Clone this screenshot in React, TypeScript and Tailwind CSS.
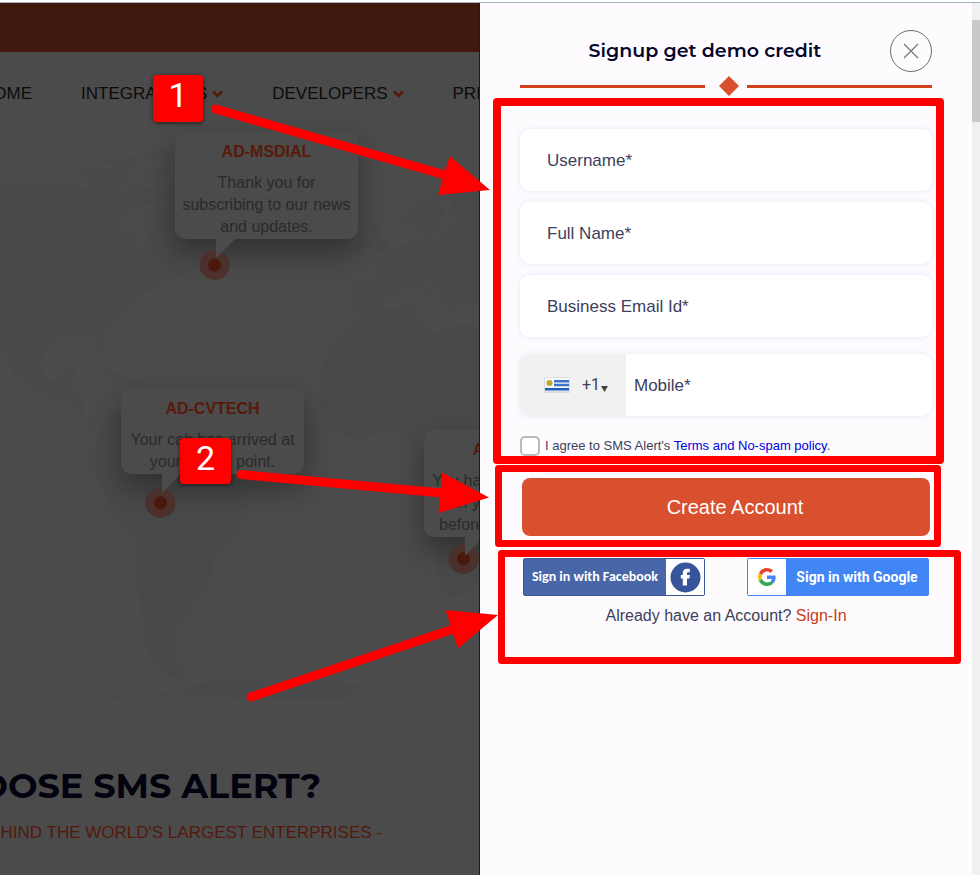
import React, { useState } from 'react';

const NAV = [
  { label: 'HOME', menu: false },
  { label: 'INTEGRATIONS', menu: true },
  { label: 'DEVELOPERS', menu: true },
  { label: 'PRICING', menu: false },
];

const PINS = [
  {
    id: 'AD-MSDIAL',
    lines: ['Thank you for', 'subscribing to our news', 'and updates.'],
    place: 'left-[175px] top-[79px]',
    dotY: 26,
  },
  {
    id: 'AD-CVTECH',
    lines: ['Your cab has arrived at', 'your pickup point.'],
    place: 'left-[121px] top-[336px]',
    dotY: 29,
  },
  {
    id: 'AD-EXAMS',
    lines: ['You have an exam next', 'in your exam hall', 'before coming to hall.'],
    place: 'left-[424px] top-[377px]',
    dotY: 22,
  },
];

const FIELDS = [
  { id: 'username', label: 'Username*', type: 'text' },
  { id: 'fullname', label: 'Full Name*', type: 'text' },
  { id: 'email', label: 'Business Email Id*', type: 'email' },
];

function WorldMap() {
  return (
    <svg className="absolute left-0 top-0 h-[648px] w-[480px]" viewBox="0 52 480 648" fill="#47494b" aria-hidden="true">
      {/* North America */}
      <path d="M0 182 L20 184 L40 184 L60 183 L75 185 L90 190 L110 190 L128 190 L136 184 L150 190 L162 186 L170 192 L164 204 L154 203 L142 206 L130 212 L118 222 L124 232 L136 236 L138 248 L143 250 L146 238 L151 230 L152 218 L160 207 L172 210 L176 222 L186 232 L197 246 L190 254 L178 262 L190 264 L192 272 L178 274 L166 281 L158 287 L150 291 L140 295 L133 302 L128 312 L118 320 L106 330 L103 336 L103 350 L100 354 L97 346 L95 338 L84 336 L74 338 L66 336 L54 340 L46 346 L42 358 L42 370 L46 380 L54 382 L62 378 L66 371 L74 368 L76 372 L70 382 L72 392 L82 395 L84 404 L84 416 L90 424 L99 422 L105 418 L99 426 L92 426 L82 418 L74 408 L62 400 L50 396 L36 390 L22 382 L12 374 L12 366 L4 354 L0 346 Z" />
      <path d="M78 174 L92 168 L108 168 L128 172 L130 182 L122 186 L106 190 L92 188 L90 180 Z" />
      <path d="M98 163 L112 159 L134 157 L139 163 L126 168 L114 165 Z M140 172 L158 168 L172 170 L160 178 L146 176 Z M142 156 L162 150 L174 152 L170 164 L156 162 Z" />
      {/* Caribbean */}
      <path d="M85 370 L94 365 L106 367 L120 376 L112 377 L100 370 Z M120 378 L132 377 L140 381 L136 385 L124 384 Z" />
      {/* South America */}
      <path d="M105 416 L122 414 L140 420 L158 430 L176 440 L196 452 L222 466 L250 484 L249 496 L242 508 L240 530 L236 540 L222 550 L213 556 L213 574 L206 588 L200 598 L190 602 L191 612 L183 620 L175 626 L178 632 L172 638 L175 646 L172 656 L179 666 L190 676 L184 679 L170 676 L158 666 L148 652 L144 630 L141 610 L137 580 L136 546 L132 532 L118 522 L110 508 L104 490 L94 470 L94 448 L102 434 Z" />
      {/* Europe */}
      <path d="M480 180 L452 184 L436 192 L420 204 L402 212 L401 222 L406 226 L413 224 L420 232 L424 240 L434 236 L440 220 L446 210 L438 206 L444 198 L452 202 L450 214 L468 218 L452 222 L444 234 L432 242 L424 242 L412 240 L404 244 L394 250 L386 256 L372 258 L378 264 L378 276 L370 282 L354 282 L353 294 L350 308 L356 316 L366 312 L380 308 L386 298 L400 290 L412 284 L420 292 L430 302 L432 308 L424 300 L428 304 L434 298 L422 282 L424 274 L434 284 L444 294 L442 304 L452 312 L458 308 L462 296 L472 304 L480 306 Z" />
      <path d="M370 226 L380 222 L380 236 L389 246 L386 252 L372 254 L378 246 Z M356 242 L368 236 L370 246 L358 250 Z" />
      {/* Africa */}
      <path d="M480 326 L466 324 L450 326 L444 332 L432 332 L420 324 L414 312 L416 306 L400 307 L384 310 L364 314 L352 322 L346 334 L332 344 L322 366 L322 388 L320 404 L330 424 L344 436 L362 438 L380 434 L398 432 L410 440 L420 460 L430 520 L434 560 L440 580 L446 597 L462 596 L480 584 Z" />
      {/* Antarctica */}
      <path d="M108 698 L122 694 L118 699 Z M132 697 L142 690 L140 699 Z M154 693 L170 692 L174 697 L158 697 Z M180 690 L196 684 L220 682 L256 682 L300 682 L340 680 L352 686 L366 685 L346 694 L346 700 L230 700 L228 692 L210 696 L184 697 Z" />
    </svg>
  );
}

function MapPin({ id, lines, place, dotY }: { id: string; lines: string[]; place: string; dotY: number }) {
  return (
    <div className={`absolute w-[183px] ${place}`}>
      <div className="rounded-[10px] bg-[#4b4b4b] px-1 pb-px text-center shadow-[0_14px_30px_rgba(0,0,0,0.35)]">
        <h3 className="mx-1 border-b border-[#474747] pt-[10px] pb-[8px] text-base/[22px] font-bold text-[#571a0a]">{id}</h3>
        <p className="text-base/[22px] whitespace-nowrap text-[#2a2a2a]">
          {lines.map(l => (
            <span key={l} className="block">{l}</span>
          ))}
        </p>
      </div>
      {/* Tail and location dot */}
      <svg className="ml-6 block h-[46px] w-9" viewBox="0 0 36 46" aria-hidden="true">
        <circle cx="15.5" cy={dotY} r="15" fill="#4c302b" />
        <circle cx="15.5" cy={dotY} r="6.5" fill="#4d180c" />
        <path d="M17 0H36L17 19Z" fill="#4b4b4b" />
      </svg>
    </div>
  );
}

function Flag() {
  return (
    <svg className="h-4 w-[26px]" viewBox="0 0 26 16" aria-hidden="true">
      <rect width="26" height="16" rx="1" fill="#d9dee4" />
      <rect x="1" y="1" width="24" height="13" fill="#f6f8fa" />
      <path d="M10 4.2H25M10 8H25" stroke="#3e75c8" strokeWidth="2.4" />
      <path d="M1 12.2H25" stroke="#1d5fc0" strokeWidth="2.4" />
      <circle cx="5.5" cy="6" r="3" fill="#c2a62c" />
    </svg>
  );
}

function FacebookMark() {
  return (
    <svg className="size-[31px]" viewBox="0 0 31 31" aria-hidden="true">
      <circle cx="15.5" cy="15.500" r="15" fill="#37559b" />
      <path d="M12.800 23.500V16.400H10.800V13H12.800V11C12.800 8 14.500 6.800 17.300 6.800H19.800V10.200H18.300C17.400 10.200 17 10.600 17 11.400V13H19.800L19.400 16.400H17V23.500Z" fill="#fff" />
    </svg>
  );
}

function GoogleMark() {
  return (
    <svg className="size-[18px]" viewBox="0 0 48 48" aria-hidden="true">
      <path fill="#EA4335" d="M24 9.5c3.54 0 6.71 1.22 9.21 3.6l6.85-6.85C35.9 2.38 30.47 0 24 0 14.62 0 6.51 5.38 2.56 13.22l7.98 6.19C12.43 13.72 17.74 9.5 24 9.5z" />
      <path fill="#4285F4" d="M46.98 24.55c0-1.57-.15-3.09-.38-4.55H24v9.02h12.94c-.58 2.96-2.26 5.48-4.78 7.18l7.73 6c4.51-4.18 7.09-10.36 7.09-17.65z" />
      <path fill="#FBBC05" d="M10.53 28.59c-.48-1.45-.76-2.99-.76-4.59s.27-3.14.76-4.59l-7.98-6.19C.92 16.46 0 20.12 0 24c0 3.88.92 7.54 2.56 10.78l7.97-6.19z" />
      <path fill="#34A853" d="M24 48c6.48 0 11.93-2.13 15.89-5.81l-7.73-6c-2.15 1.45-4.92 2.3-8.16 2.3-6.26 0-11.57-4.22-13.47-9.91l-7.98 6.19C6.51 42.62 14.62 48 24 48z" />
    </svg>
  );
}

function SignupDrawer() {
  const [agreed, setAgreed] = useState(false);

  return (
    <aside className="flex w-[500px] shrink-0 bg-[#fdfbfe]">
      <div className="flex-1 px-10 pt-[27px]">
        <div className="flex items-center">
          <h2 className="flex-1 text-center font-[Montserrat,Inter,sans-serif] text-[19px]/7 font-semibold text-[#06062a]">
            Signup get demo credit
          </h2>
          <button type="button" aria-label="Close" className="flex size-[42px] items-center justify-center rounded-full border border-[#6e6e6e]">
            <svg className="size-4" viewBox="0 0 16 16" stroke="#777" strokeWidth="1.3" aria-hidden="true">
              <path d="M1 1L15 15M15 1L1 15" />
            </svg>
          </button>
        </div>

        <div className="mt-1 flex items-center">
          <span className="h-[3px] flex-1 bg-[#d2421e]" />
          <svg className="mr-2 ml-[14px] h-5 w-5" viewBox="0 0 20 20" aria-hidden="true">
            <path d="M10 0L20 10L10 20L0 10Z" fill="#d9502e" />
          </svg>
          <span className="h-[3px] flex-1 bg-[#d2421e]" />
        </div>

        <form className="mt-[33px]" onSubmit={e => e.preventDefault()}>
          <div className="flex flex-col gap-[11px]">
            {FIELDS.map(f => (
              <div key={f.id}>
                <label htmlFor={f.id} className="sr-only">{f.label}</label>
                <input
                  id={f.id}
                  type={f.type}
                  placeholder={f.label}
                  className="block h-[62px] w-full rounded-[10px] bg-white px-[27px] pt-[2px] text-[17px] text-[#3d405b] shadow-[0_0_5px_rgba(90,80,200,0.13)] outline-none placeholder:text-[#3d405b]"
                />
              </div>
            ))}
          </div>

          <div className="mt-[17px] flex h-[62px] overflow-hidden rounded-[10px] bg-white shadow-[0_0_5px_rgba(90,80,200,0.13)]">
            <div className="flex w-[106px] items-center bg-[#f1f1f1] pl-6">
              <Flag />
              <label htmlFor="dial" className="sr-only">Country code</label>
              <select id="dial" className="ml-3 w-[19px] appearance-none bg-transparent font-[Roboto,sans-serif] text-base text-[#3d405b] outline-none">
                <option>+1</option>
              </select>
              <svg className="mt-2 h-[6px] w-[7px]" viewBox="0 0 7 6" aria-hidden="true">
                <path d="M0 0H7L3.5 6Z" fill="#444" />
              </svg>
            </div>
            <label htmlFor="mobile" className="sr-only">Mobile*</label>
            <input
              id="mobile"
              type="tel"
              placeholder="Mobile*"
              className="min-w-0 flex-1 px-2 pt-[2px] text-[17px] text-[#3d405b] outline-none placeholder:text-[#3d405b]"
            />
          </div>

          <div className="mt-5 flex items-center gap-[5px] text-[13px]/5 text-[#3d405b]">
            <input
              id="agree"
              type="checkbox"
              checked={agreed}
              onChange={e => setAgreed(e.target.checked)}
              className="size-5 appearance-none rounded-[5px] border-2 border-[#bdb9b9] bg-white checked:bg-[#d9502e]"
            />
            <label htmlFor="agree">
              I agree to SMS Alert's <a href="#terms" className="text-[#0000e0]">Terms and No-spam policy</a>.
            </label>
          </div>

          <div className="mt-[22px] px-[2px]">
            <button type="submit" className="h-[58px] w-full rounded-lg bg-[#d9502e] pl-[18px] text-[20px] text-white">
              Create Account
            </button>
          </div>
        </form>

        <div className="mt-[22px] flex justify-between px-[3px]">
          <button type="button" className="flex h-[38px] w-[182px] rounded-[2px] border border-[#3b5998] bg-[#4967a8]">
            <span className="flex-1 self-center text-center font-[Carlito,'Open_Sans',sans-serif] text-sm font-bold whitespace-nowrap text-white">
              Sign in with Facebook
            </span>
            <span className="flex h-full w-[38px] items-center justify-center bg-white">
              <FacebookMark />
            </span>
          </button>
          <button type="button" className="flex h-[38px] w-[182px] rounded-[2px] border border-[#4285f4] bg-[#4285f4]">
            <span className="flex h-full w-[38px] items-center justify-center bg-white">
              <GoogleMark />
            </span>
            <span className="flex-1 self-center text-center font-[Roboto,sans-serif] text-sm font-bold whitespace-nowrap text-white">
              Sign in with Google
            </span>
          </button>
        </div>

        <p className="mt-2 text-center text-base/6 text-[#3d405b]">
          Already have an Account? <a href="#signin" className="text-[#c93c18]">Sign-In</a>
        </p>
      </div>

      {/* Scrollbar */}
      <div className="w-2 bg-[#f0f0f0] pt-[17px]">
        <div className="h-[102px] bg-[#c9c9c9]" />
      </div>
    </aside>
  );
}

function Callouts() {
  return (
    <div className="pointer-events-none absolute top-0 right-0 h-[875px] w-[980px]">
      <svg className="absolute inset-0" viewBox="0 0 980 875" fill="none" stroke="#f00" strokeLinejoin="round" strokeLinecap="round" aria-hidden="true">
        <rect x="497" y="102" width="443" height="358" strokeWidth="8" />
        <rect x="498.5" y="468.5" width="439" height="75" strokeWidth="7" />
        <rect x="501.5" y="553.5" width="456" height="107" strokeWidth="7" />
        <path d="M215.5 109L445 175M241 474.5L442 493M251 697L455 628.5" strokeWidth="9" />
        <path d="M449.5 156L438 195L490 190ZM442 472.5L438.5 513L489 497.5ZM445.5 610L458 648.5L498 615Z" fill="#f00" stroke="none" />
      </svg>
      <span className="absolute top-[75px] left-[153px] h-[47px] w-[50px] rounded-[4px] bg-[#f00] text-center font-[Roboto,sans-serif] text-[34px]/10 text-white shadow-[0_1px_4px_rgba(0,0,0,0.6)]">1</span>
      <span className="absolute top-[438px] left-[180px] h-[46px] w-[51px] rounded-[4px] bg-[#f00] text-center font-[Roboto,sans-serif] text-[34px]/10 text-white shadow-[0_1px_4px_rgba(0,0,0,0.6)]">2</span>
    </div>
  );
}

export default function App() {
  return (
    <div className="relative flex min-h-screen flex-col overflow-hidden font-['Liberation_Sans',Arial,sans-serif]">
      <div className="h-[3px] border-b border-[#9fb0c2] bg-white" />

      <div className="flex flex-1">
        <main className="min-w-0 flex-1 overflow-hidden border-r border-[#1c1c1c] bg-[#4b4b4b]">
          <div className="h-[49px] bg-[#40180e]" />

          <section className="relative h-[648px] border-b border-[#484848]">
            <WorldMap />
            <nav className="relative -ml-[19px] flex h-[84px] items-center gap-[49px] text-[17px] whitespace-nowrap text-[#0c0c0c]">
              {NAV.map(n => (
                <a key={n.label} href="#nav" className="flex items-center gap-[5px]">
                  {n.label}
                  {n.menu && (
                    <svg className="h-2 w-[11px]" viewBox="0 0 11 8" fill="none" stroke="#571a0a" strokeWidth="2.6" aria-hidden="true">
                      <path d="M1 1.500L5.500 6L10 1.500" />
                    </svg>
                  )}
                </a>
              ))}
            </nav>
            {PINS.map(p => (
              <MapPin key={p.id} {...p} />
            ))}
          </section>

          <section className="pt-[66px] whitespace-nowrap">
            <div className="flex justify-end pr-[158px]">
              <h1 className="font-[Montserrat,Inter,sans-serif] text-[35px]/10 font-bold text-[#03030f]">WHY CHOOSE SMS ALERT?</h1>
            </div>
            <div className="mt-[15px] flex justify-end pr-[97px]">
              <p className="text-[17px]/6 text-[#521a0c]">- THE POWER BEHIND THE WORLD'S LARGEST ENTERPRISES -</p>
            </div>
          </section>
        </main>

        <SignupDrawer />
      </div>

      <Callouts />
    </div>
  );
}
